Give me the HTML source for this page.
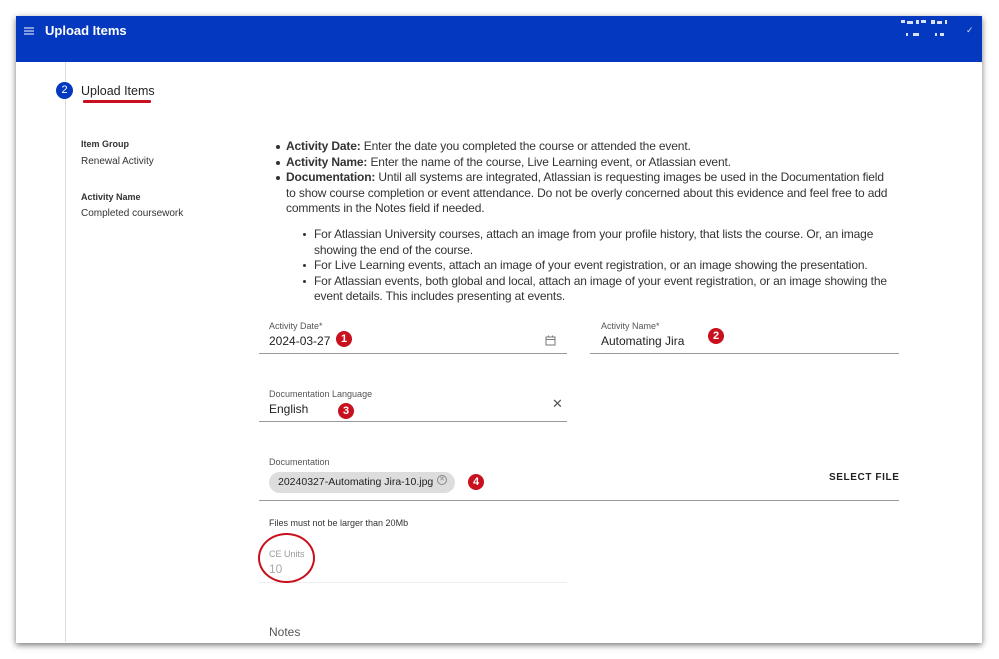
<!DOCTYPE html>
<html><head><meta charset="utf-8"><style>
*{margin:0;padding:0;box-sizing:border-box}
body{width:999px;height:659px;background:#fff;font-family:"Liberation Sans",sans-serif;color:#222;position:relative;overflow:hidden}
.a{position:absolute;white-space:nowrap}
.panel{position:absolute;left:16px;top:16px;width:966px;height:627px;background:#fff;box-shadow:0 2px 6px rgba(0,0,0,.55)}
.hdr{position:absolute;left:16px;top:16px;width:966px;height:46px;background:#0439bf}
.t{font-size:12px;letter-spacing:-0.15px;color:#333}
.lbl{font-size:9px;color:#555}
.val{font-size:12px;color:#222}
.line{position:absolute;height:1px;background:#999}
.badge{position:absolute;width:16px;height:16px;border-radius:50%;background:#c8101e;color:#fff;font-size:11px;font-weight:bold;text-align:center;line-height:16px}
.dot{position:absolute;width:4px;height:4px;border-radius:50%;background:#333}
.px{position:absolute;background:#fff;opacity:.85}
</style></head><body>
<div class="panel"></div>
<div class="hdr"></div>
<svg class="a" style="left:24px;top:27px" width="10" height="8"><path d="M0 1h10M0 4h10M0 7h10" stroke="#fff" stroke-width="1"/></svg>
<div class="a" style="left:45px;top:23px;color:#fff;font-size:13px;font-weight:bold">Upload Items</div>
<div class="px" style="left:901px;top:20px;width:4px;height:3px"></div>
<div class="px" style="left:907px;top:21px;width:6px;height:3px"></div>
<div class="px" style="left:916px;top:20px;width:3px;height:4px"></div>
<div class="px" style="left:921px;top:20px;width:5px;height:3px"></div>
<div class="px" style="left:931px;top:20px;width:4px;height:4px"></div>
<div class="px" style="left:937px;top:21px;width:5px;height:3px"></div>
<div class="px" style="left:945px;top:20px;width:2px;height:4px"></div>
<div class="px" style="left:906px;top:33px;width:2px;height:3px"></div>
<div class="px" style="left:913px;top:33px;width:6px;height:3px"></div>
<div class="px" style="left:935px;top:33px;width:2px;height:3px"></div>
<div class="px" style="left:940px;top:33px;width:4px;height:3px"></div>
<div class="a" style="left:966px;top:25px;color:#dde;font-size:9px">✓</div>
<div style="position:absolute;left:65px;top:62px;width:1px;height:580px;background:#ddd"></div>
<div class="a" style="left:56px;top:82px;width:17px;height:17px;border-radius:50%;background:#0439bf;color:#fff;font-size:11px;text-align:center;line-height:17px">2</div>
<div class="a" style="left:81px;top:84px;font-size:12.5px;color:#222">Upload Items</div>
<div style="position:absolute;left:83px;top:100px;width:68px;height:3px;background:#c8101e;border-radius:1px"></div>
<div class="a" style="left:81px;top:139px;font-size:9px;font-weight:bold;color:#333">Item Group</div>
<div class="a" style="left:81px;top:156px;font-size:10px;color:#333">Renewal Activity</div>
<div class="a" style="left:81px;top:192px;font-size:9px;font-weight:bold;color:#333">Activity Name</div>
<div class="a" style="left:81px;top:208px;font-size:10px;color:#333">Completed coursework</div>

<div class="dot" style="left:276px;top:145px"></div>
<div class="a t" style="left:286px;top:139px"><b>Activity Date:</b> Enter the date you completed the course or attended the event.</div>
<div class="dot" style="left:276px;top:161px"></div>
<div class="a t" style="left:286px;top:155px"><b>Activity Name:</b> Enter the name of the course, Live Learning event, or Atlassian event.</div>
<div class="dot" style="left:276px;top:176px"></div>
<div class="a t" style="left:286px;top:170px"><b>Documentation:</b> Until all systems are integrated, Atlassian is requesting images be used in the Documentation field</div>
<div class="a t" style="left:286px;top:186px">to show course completion or event attendance. Do not be overly concerned about this evidence and feel free to add</div>
<div class="a t" style="left:286px;top:201px">comments in the Notes field if needed.</div>
<div class="dot" style="left:303px;top:233px;width:3px;height:3px"></div>
<div class="a t" style="left:314px;top:227px">For Atlassian University courses, attach an image from your profile history, that lists the course. Or, an image</div>
<div class="a t" style="left:314px;top:243px">showing the end of the course.</div>
<div class="dot" style="left:303px;top:264px;width:3px;height:3px"></div>
<div class="a t" style="left:314px;top:258px">For Live Learning events, attach an image of your event registration, or an image showing the presentation.</div>
<div class="dot" style="left:303px;top:280px;width:3px;height:3px"></div>
<div class="a t" style="left:314px;top:274px">For Atlassian events, both global and local, attach an image of your event registration, or an image showing the</div>
<div class="a t" style="left:314px;top:289px">event details. This includes presenting at events.</div>

<div class="a lbl" style="left:269px;top:321px">Activity Date*</div>
<div class="a val" style="left:269px;top:334px">2024-03-27</div>
<div class="badge" style="left:336px;top:331px">1</div>
<svg class="a" style="left:545px;top:335px" width="11" height="11" viewBox="0 0 11 11"><rect x="1" y="2" width="9" height="8" fill="none" stroke="#777" stroke-width="1"/><line x1="1" y1="4.5" x2="10" y2="4.5" stroke="#777"/><line x1="3.5" y1="0.5" x2="3.5" y2="2.5" stroke="#777"/><line x1="7.5" y1="0.5" x2="7.5" y2="2.5" stroke="#777"/></svg>
<div class="line" style="left:259px;top:353px;width:308px"></div>
<div class="a lbl" style="left:601px;top:321px">Activity Name*</div>
<div class="a val" style="left:601px;top:334px">Automating Jira</div>
<div class="badge" style="left:708px;top:328px">2</div>
<div class="line" style="left:590px;top:353px;width:309px"></div>

<div class="a lbl" style="left:269px;top:389px">Documentation Language</div>
<div class="a val" style="left:269px;top:402px">English</div>
<div class="badge" style="left:338px;top:403px">3</div>
<div class="a" style="left:552px;top:396px;font-size:13px;color:#555">✕</div>
<div class="line" style="left:259px;top:421px;width:308px"></div>

<div class="a lbl" style="left:269px;top:457px">Documentation</div>
<div class="a" style="left:269px;top:472px;width:186px;height:21px;border-radius:11px;background:#ddd"></div>
<div class="a" style="left:278px;top:476px;font-size:10.5px;color:#222">20240327-Automating Jira-10.jpg</div>
<div class="a" style="left:437px;top:475px;width:10px;height:10px;border:1px solid #888;border-radius:50%;font-size:7px;line-height:8px;text-align:center;color:#888">✕</div>
<div class="badge" style="left:468px;top:474px">4</div>
<div class="a" style="left:829px;top:472px;font-size:10px;font-weight:bold;letter-spacing:0.6px;color:#222">SELECT FILE</div>
<div class="line" style="left:259px;top:500px;width:640px"></div>

<div class="a" style="left:269px;top:518px;font-size:9px;color:#333">Files must not be larger than 20Mb</div>
<div class="a lbl" style="left:269px;top:549px;color:#999">CE Units</div>
<div class="a" style="left:269px;top:562px;font-size:12px;color:#aaa">10</div>
<div class="line" style="left:259px;top:582px;width:308px;background:#eee"></div>
<div class="a" style="left:258px;top:533px;width:57px;height:50px;border:2.5px solid #c8101e;border-radius:50%"></div>
<div class="a" style="left:269px;top:625px;font-size:12px;color:#555">Notes</div>
</body></html>
